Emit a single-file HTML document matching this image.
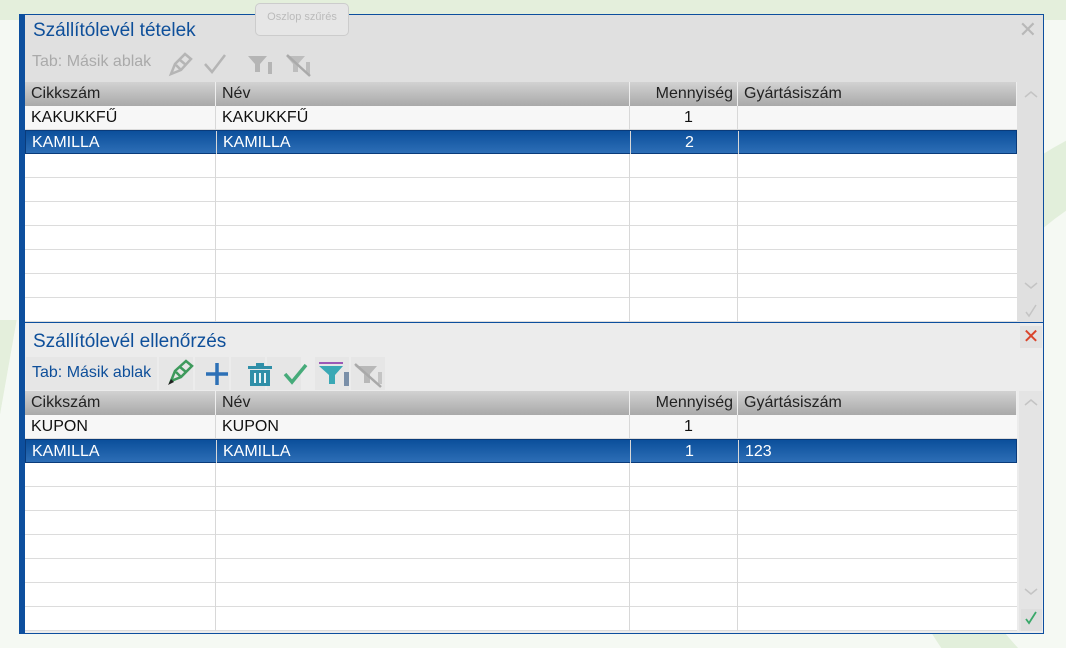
<!DOCTYPE html>
<html><head><meta charset="utf-8"><style>
*{margin:0;padding:0;box-sizing:border-box}
html,body{width:1066px;height:648px;overflow:hidden}
body{background:#f5f9f3;font-family:"Liberation Sans",sans-serif;position:relative}
.a{position:absolute}
.panel{position:absolute;left:19px;width:1025px;border:1px solid #0d4f9e;border-left:6px solid #0d4f9e}
.title{position:absolute;left:8px;font-size:19px;color:#0e4f9a}
.hdr{position:absolute;left:0;width:992px;height:24px;background:linear-gradient(#d2d2d2,#a9a9a9);font-size:16px;color:#222}
.row{position:absolute;left:0;width:992px;height:24px;background:#fff;border-bottom:1px solid #dcdcdc;font-size:16px;color:#111}
.row.alt{background:#f7f7f7}
.row.sel{background:linear-gradient(#0b4f9b,#2d6eb6);color:#fff;border:1px solid #0a3b7a}
.c{position:absolute;top:0;height:24px;line-height:24px;padding-left:6px;border-right:1px solid #d8d8d8;overflow:hidden;white-space:nowrap}
.hdr .c{border-right:1px solid #eee}
.c1{left:0;width:191px}.c2{left:191px;width:414px}.c3{left:605px;width:108px;text-align:right;padding-right:4px}.c4{left:713px;width:279px;border-right:none}
.q{text-align:center;padding-left:14px}
.btn{position:absolute;top:0;height:33px;background:#e6e6e6}
</style></head><body>
<div class="a" style="left:0;top:0;width:1066px;height:648px;overflow:hidden">
<div class="a" style="left:0;top:0;width:1066px;height:20px;background:#e4efdc"></div>
<div class="a" style="left:880px;top:100px;width:700px;height:700px;border-radius:50%;border:60px solid #e2efdb"></div>
<div class="a" style="left:0;top:320px;width:20px;height:120px;background:linear-gradient(100deg,#e4efdc 40%,#f5f9f3 41%)"></div>
</div>

<div class="panel" style="top:14px;height:309px;background:#e0e0e0">
  <div class="title" style="top:5px">Szállítólevél tételek</div>
  <div class="a" style="right:6px;top:2px;font-size:22px;color:#b8b8b8">✕</div>
  <div class="a" style="left:7px;top:38px;font-size:16px;color:#aaa">Tab: Másik ablak</div>
  <svg class="a" style="left:138px;top:35px" width="170" height="28">
    <g stroke="#b5b5b5" stroke-width="2.5" fill="none">
      <path d="M8 24 L12 14 L22 4 L28 9 L18 20 Z M13 15 L18 20 M17 10 L23 15"/>
      <path d="M42 14 L49 22 L62 5"/>
    </g>
    <path d="M85 6 H104 L97 14 V22 L92 22 V14 Z" fill="#b5b5b5"/><rect x="105" y="12" width="4" height="12" fill="#b5b5b5"/>
    <path d="M123 6 H142 L135 14 V22 L130 22 V14 Z" fill="#bdbdbd"/><rect x="143" y="12" width="4" height="12" fill="#bdbdbd"/>
    <path d="M124 5 L147 26" stroke="#aaa" stroke-width="2.5"/>
  </svg>
  <div class="a" style="left:230px;top:-12px;width:94px;height:33px;border:1px solid #ccc;border-radius:5px;background:#e6e6e6;font-size:11px;color:#bbb;text-align:center;line-height:26px">Oszlop szűrés</div>
  <div class="hdr" style="top:67px"><div class="c c1">Cikkszám</div><div class="c c2">Név</div><div class="c c3">Mennyiség</div><div class="c c4">Gyártásiszám</div></div>
  <div class="row alt" style="top:91px"><div class="c c1">KAKUKKFŰ</div><div class="c c2">KAKUKKFŰ</div><div class="c c3 q">1</div><div class="c c4"></div></div>
  <div class="row sel" style="top:115px"><div class="c c1">KAMILLA</div><div class="c c2">KAMILLA</div><div class="c c3 q">2</div><div class="c c4"></div></div>
  <div class="row" style="top:139px"><div class="c c1"></div><div class="c c2"></div><div class="c c3"></div></div>
  <div class="row" style="top:163px"><div class="c c1"></div><div class="c c2"></div><div class="c c3"></div></div>
  <div class="row" style="top:187px"><div class="c c1"></div><div class="c c2"></div><div class="c c3"></div></div>
  <div class="row" style="top:211px"><div class="c c1"></div><div class="c c2"></div><div class="c c3"></div></div>
  <div class="row" style="top:235px"><div class="c c1"></div><div class="c c2"></div><div class="c c3"></div></div>
  <div class="row" style="top:259px"><div class="c c1"></div><div class="c c2"></div><div class="c c3"></div></div>
  <div class="row" style="top:283px;height:24px"><div class="c c1"></div><div class="c c2"></div><div class="c c3"></div></div>
  <svg class="a" style="left:996px;top:70px" width="20" height="240"><g stroke="#c4c4c4" stroke-width="1.5" fill="none"><path d="M4 12 L10 7 L16 12"/><path d="M4 198 L10 203 L16 198"/><path d="M5 227 L8 231 L15 220"/></g></svg>
</div>

<div class="panel" style="top:322px;height:312px;background:#ececec">
  <div class="title" style="top:8px">Szállítólevél ellenőrzés</div>
  <div class="a" style="right:1px;top:3px;width:22px;height:22px;background:#e2e2e2;color:#d9442b;font-size:20px;line-height:22px;text-align:center">✕</div>
  <div class="btn" style="left:1px;top:34px;width:131px"></div>
  <div class="a" style="left:7px;top:41px;font-size:16px;color:#0e4f9a">Tab: Másik ablak</div>
  <div class="btn" style="left:134px;top:34px;width:34px"></div>
  <div class="btn" style="left:170px;top:34px;width:34px"></div>
  <div class="btn" style="left:206px;top:34px;width:34px"></div>
  <div class="btn" style="left:242px;top:34px;width:34px"></div>
  <div class="btn" style="left:290px;top:34px;width:34px"></div>
  <div class="btn" style="left:326px;top:34px;width:34px"></div>
  <svg class="a" style="left:134px;top:34px" width="230" height="33">
    <g stroke="#3e9a5c" stroke-width="2.5" fill="none"><path d="M12 24 L16 14 L27 4 L33 9 L22 20 Z M17 15 L22 20 M21 10 L27 15"/></g>
    <path d="M9 28 L12 22 L15 25 Z" fill="#222"/>
    <path d="M58 6 V28 M47 17 H69" stroke="#2d70b6" stroke-width="3.5"/>
    <g fill="#2f8fa8"><rect x="89" y="9" width="24" height="3"/><rect x="97" y="6" width="8" height="3"/><path d="M91 13 H111 V29 H91 Z"/></g>
    <g stroke="#e8f4f6" stroke-width="2"><path d="M96 16 V26 M101 16 V26 M106 16 V26"/></g>
    <path d="M126 17 L133 25 L147 8" stroke="#46ab7a" stroke-width="3.5" fill="none"/>
    <rect x="160" y="5" width="24" height="2" fill="#9b59b6"/>
    <path d="M160 9 H184 L176 18 V27 L170 27 V18 Z" fill="#3aa8b5"/><rect x="185" y="15" width="5" height="14" fill="#7a8fa8"/>
    <path d="M196 9 H218 L211 17 V26 L205 26 V17 Z" fill="#b8b8b8"/><rect x="219" y="15" width="4" height="12" fill="#c4c4c4"/>
    <path d="M196 7 L222 30" stroke="#a9a9a9" stroke-width="2.5"/>
  </svg>
  <div class="hdr" style="top:68px"><div class="c c1">Cikkszám</div><div class="c c2">Név</div><div class="c c3">Mennyiség</div><div class="c c4">Gyártásiszám</div></div>
  <div class="row alt" style="top:92px"><div class="c c1">KUPON</div><div class="c c2">KUPON</div><div class="c c3 q">1</div><div class="c c4"></div></div>
  <div class="row sel" style="top:116px"><div class="c c1">KAMILLA</div><div class="c c2">KAMILLA</div><div class="c c3 q">1</div><div class="c c4">123</div></div>
  <div class="row" style="top:140px"><div class="c c1"></div><div class="c c2"></div><div class="c c3"></div></div>
  <div class="row" style="top:164px"><div class="c c1"></div><div class="c c2"></div><div class="c c3"></div></div>
  <div class="row" style="top:188px"><div class="c c1"></div><div class="c c2"></div><div class="c c3"></div></div>
  <div class="row" style="top:212px"><div class="c c1"></div><div class="c c2"></div><div class="c c3"></div></div>
  <div class="row" style="top:236px"><div class="c c1"></div><div class="c c2"></div><div class="c c3"></div></div>
  <div class="row" style="top:260px"><div class="c c1"></div><div class="c c2"></div><div class="c c3"></div></div>
  <div class="row" style="top:284px;height:24px"><div class="c c1"></div><div class="c c2"></div><div class="c c3"></div></div>
  <div class="a" style="left:994px;top:68px;width:23px;height:240px;background:#e4e4e4"></div>
  <div class="a" style="left:996px;top:286px;width:21px;height:22px;background:#dedede"></div>
  <svg class="a" style="left:996px;top:70px" width="20" height="240"><g stroke="#c4c4c4" stroke-width="1.5" fill="none"><path d="M4 12 L10 7 L16 12"/><path d="M4 196 L10 201 L16 196"/></g><path d="M5 226 L8 230 L15 219" stroke="#3aa86a" stroke-width="1.8" fill="none"/></svg>
</div>
</body></html>
